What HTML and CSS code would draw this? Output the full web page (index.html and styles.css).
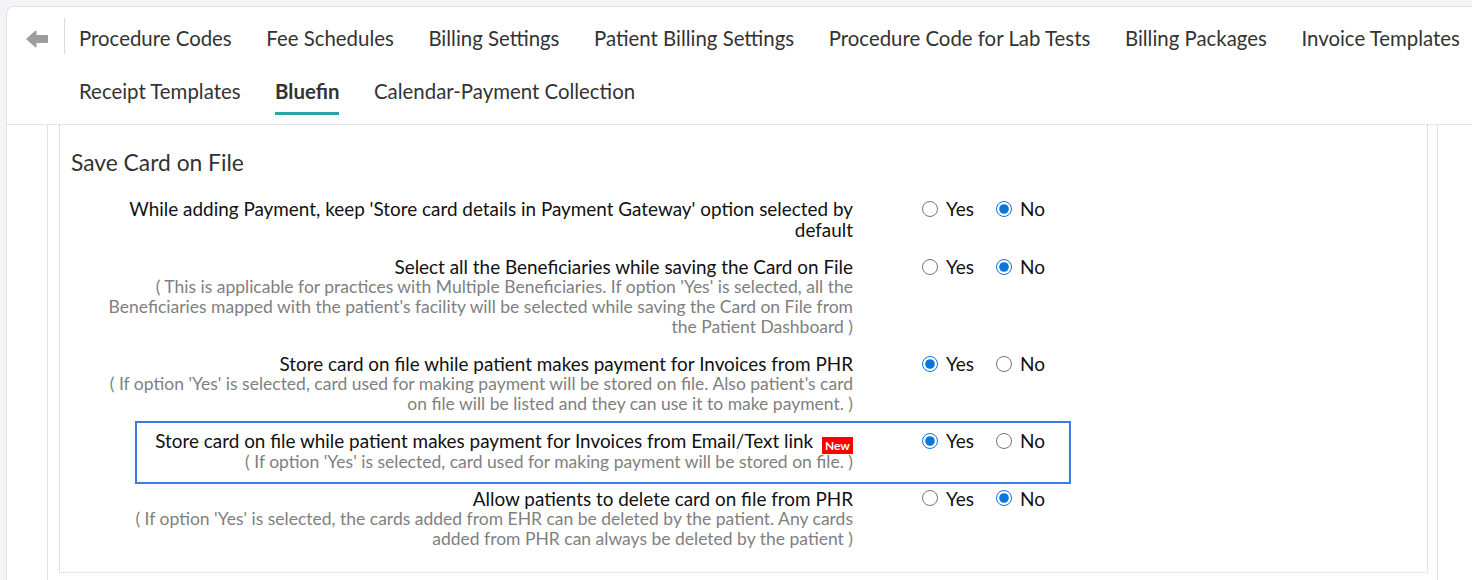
FILE: index.html
```html
<!DOCTYPE html>
<html lang="en">
<head>
    <meta charset="UTF-8" />
    <meta name="viewport" content="width=device-width, initial-scale=1.0" />
    <title>Billing Settings - Bluefin</title>
    <link rel="stylesheet" href="styles.css">
</head>
<body>
    <div class="page-card">
        <header class="tabs-header">
            <div class="tabs-row">
                <button class="back-btn" title="Back">
                    <svg width="22" height="18" viewBox="0 0 22 18">
                        <path d="M0 9 L9.5 0.5 L10.5 1 L10.5 5 L21.5 5 L22 5.5 L22 12.5 L21.5 13 L10.5 13 L10.5 17 L9.5 17.5 Z" fill="#9d9d9d"/>
                    </svg>
                </button>
                <span class="tabs-sep"></span>
                <nav class="tabs">
                    <a class="tab">Procedure Codes</a>
                    <a class="tab">Fee Schedules</a>
                    <a class="tab">Billing Settings</a>
                    <a class="tab">Patient Billing Settings</a>
                    <a class="tab">Procedure Code for Lab Tests</a>
                    <a class="tab">Billing Packages</a>
                    <a class="tab">Invoice Templates</a>
                </nav>
            </div>
            <nav class="tabs tabs-second">
                <a class="tab">Receipt Templates</a>
                <a class="tab active">Bluefin</a>
                <a class="tab">Calendar-Payment Collection</a>
            </nav>
        </header>

        <div class="content">
            <div class="side-rail"></div>
            <main class="main-area">
                <section class="panel">
                    <h3 class="panel-title">Save Card on File</h3>

                    <div class="setting-row">
                        <div class="setting-label">
                            While adding Payment, keep 'Store card details in Payment Gateway' option selected by default
                        </div>
                        <div class="setting-options">
                            <label class="option"><input type="radio" name="s1" />Yes</label>
                            <label class="option"><input type="radio" name="s1" checked />No</label>
                        </div>
                    </div>

                    <div class="setting-row">
                        <div class="setting-label">
                            Select all the Beneficiaries while saving the Card on File
                            <div class="setting-note">( This is applicable for practices with Multiple Beneficiaries. If option 'Yes' is selected, all the Beneficiaries mapped with the patient's facility will be selected while saving the Card on File from the Patient Dashboard )</div>
                        </div>
                        <div class="setting-options">
                            <label class="option"><input type="radio" name="s2" />Yes</label>
                            <label class="option"><input type="radio" name="s2" checked />No</label>
                        </div>
                    </div>

                    <div class="setting-row">
                        <div class="setting-label">
                            Store card on file while patient makes payment for Invoices from PHR
                            <div class="setting-note">( If option 'Yes' is selected, card used for making payment will be stored on file. Also patient's card on file will be listed and they can use it to make payment. )</div>
                        </div>
                        <div class="setting-options">
                            <label class="option"><input type="radio" name="s3" checked />Yes</label>
                            <label class="option"><input type="radio" name="s3" />No</label>
                        </div>
                    </div>

                    <div class="setting-row highlight">
                        <div class="setting-label">
                            Store card on file while patient makes payment for Invoices from Email/Text link <span class="badge-new">New</span>
                            <div class="setting-note">( If option 'Yes' is selected, card used for making payment will be stored on file. )</div>
                        </div>
                        <div class="setting-options">
                            <label class="option"><input type="radio" name="s4" checked />Yes</label>
                            <label class="option"><input type="radio" name="s4" />No</label>
                        </div>
                    </div>

                    <div class="setting-row">
                        <div class="setting-label">
                            Allow patients to delete card on file from PHR
                            <div class="setting-note">( If option 'Yes' is selected, the cards added from EHR can be deleted by the patient. Any cards added from PHR can always be deleted by the patient )</div>
                        </div>
                        <div class="setting-options">
                            <label class="option"><input type="radio" name="s5" />Yes</label>
                            <label class="option"><input type="radio" name="s5" checked />No</label>
                        </div>
                    </div>
                </section>
            </main>
        </div>
    </div>
</body>
</html>
```

FILE: styles.css
```css
body {
    margin: 0;
    background: #f3f4f7;
    font-family: Lato, "Open Sans", sans-serif;
    color: #333;
    overflow: hidden;
}
.page-card {
    margin: 6px 0 0 6px;
    background: #fff;
    border: 1px solid #e2e2e2;
    border-right: none;
    border-radius: 8px 0 0 0;
    min-height: 600px;
}
.tabs-header {
    padding-bottom: 9px;
    border-bottom: 1px solid #e4e4e4;
}
.tabs-row {
    display: flex;
    align-items: center;
    height: 62px;
    padding-left: 19px;
}
.back-btn {
    background: none;
    border: none;
    padding: 0;
    margin-top: 2px;
    width: 22px;
    height: 18px;
    cursor: pointer;
}
.back-btn svg { display: block; }
.tabs-sep {
    width: 1px;
    height: 36px;
    margin: -4px 14px 0 16px;
    background: #dcdcdc;
}
.tabs {
    display: flex;
    gap: 34.6px;
    white-space: nowrap;
}
.tab {
    font-size: 20.4px;
    line-height: 22px;
    color: #333;
    cursor: pointer;
}
.tabs-second {
    padding: 11px 0 0 72px;
}
.tabs-second .tab {
    padding-bottom: 10px;
    border-bottom: 3px solid transparent;
}
.tabs-second .tab.active {
    font-weight: bold;
    border-bottom-color: #25a7a9;
}
.content {
    display: flex;
}
.side-rail {
    width: 40px;
    border-right: 1px solid #e4e4e4;
}
.main-area {
    width: 1369px;
    padding: 0 9px 7px 11px;
    border-right: 1px solid #e4e4e4;
}
.panel {
    border: 1px dotted #cfcfcf;
    border-top: none;
    padding: 25px 0 15px 0;
}
.panel-title {
    margin: 0 0 16px 11px;
    font-size: 22.8px;
    line-height: 24px;
    font-weight: normal;
    color: #333;
}
.setting-row {
    position: relative;
    display: flex;
    align-items: flex-start;
    width: 971px;
    margin-left: 40px;
    padding: 8px 0;
}
.setting-row.highlight::before {
    content: "";
    position: absolute;
    left: 35px;
    right: 0;
    top: -1px;
    bottom: -4px;
    border: 2px solid #3a7be6;
    pointer-events: none;
}
.setting-label {
    width: 753px;
    text-align: right;
    font-size: 18.9px;
    line-height: 21px;
    color: #111;
}
.setting-note {
    font-size: 17.5px;
    line-height: 20px;
    color: #7f7f7f;
}
.badge-new {
    display: inline-block;
    position: relative;
    top: 2px;
    margin-left: 4px;
    padding: 0 3px;
    background: #f00;
    color: #fff;
    font-size: 12px;
    font-weight: bold;
    line-height: 17px;
    vertical-align: middle;
}
.setting-options {
    display: flex;
    gap: 22px;
    margin-left: 69px;
    height: 21px;
    align-items: center;
}
.option {
    display: flex;
    align-items: center;
    gap: 8px;
    font-size: 19px;
    color: #111;
    cursor: pointer;
}
.option input {
    width: 16px;
    height: 16px;
    margin: 0;
    accent-color: #0a76d8;
}
```
